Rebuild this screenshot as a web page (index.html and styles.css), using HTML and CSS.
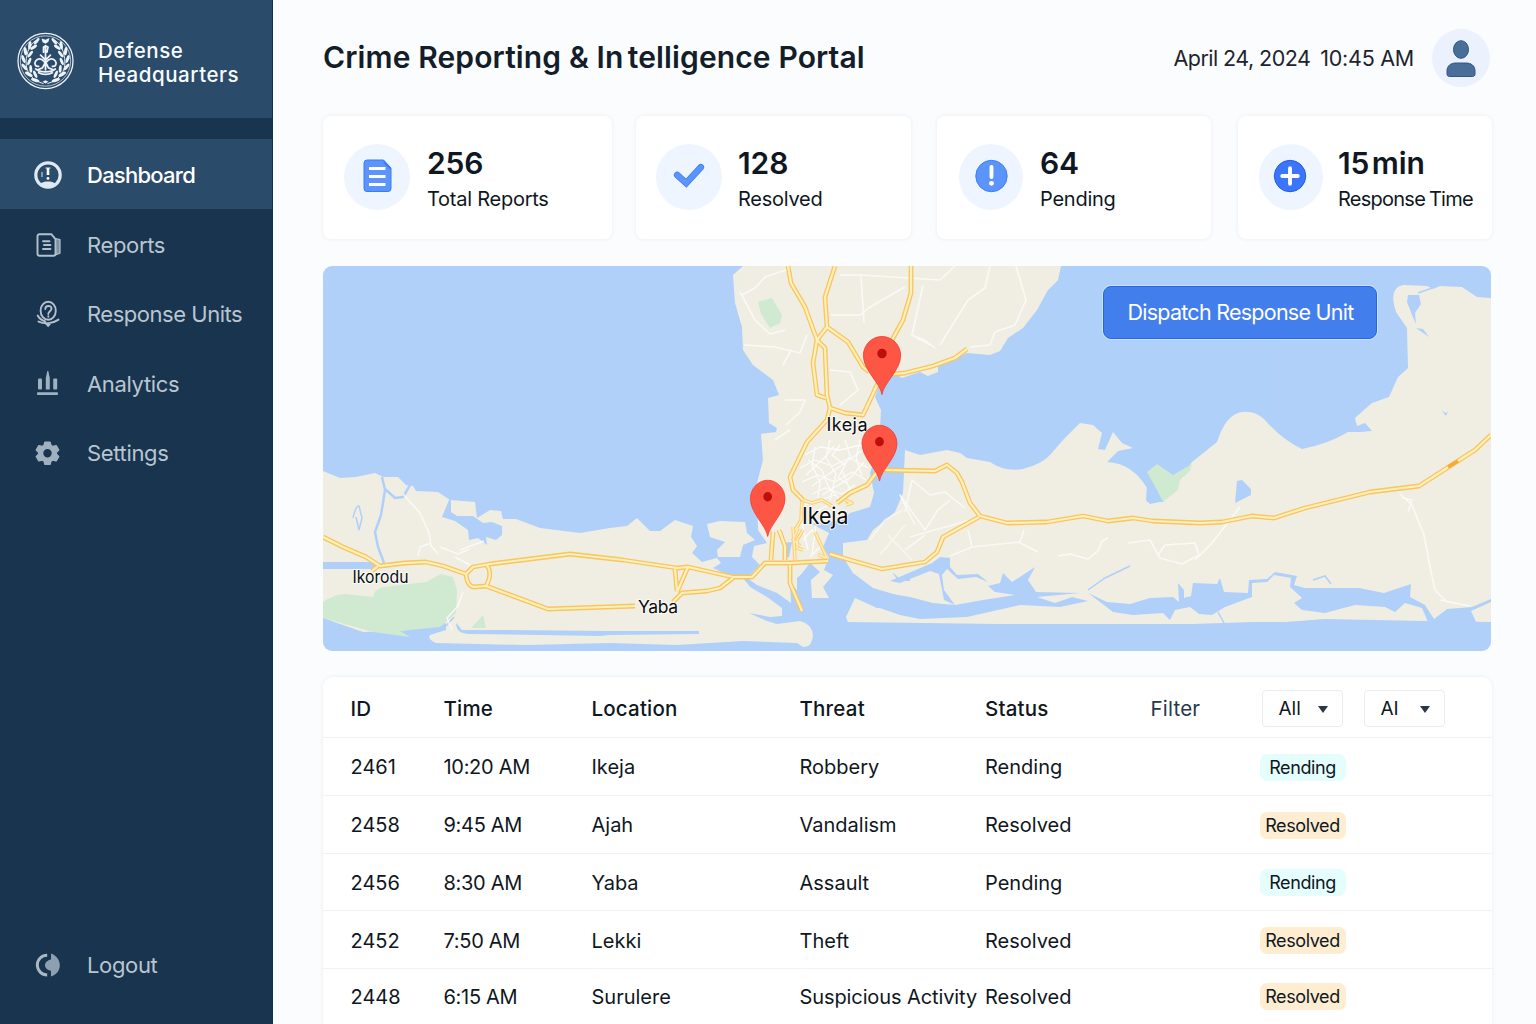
FILE: index.html
```html
<!DOCTYPE html>
<html lang="en">
<head>
<meta charset="utf-8">
<title>Crime Reporting &amp; Intelligence Portal</title>
<link rel="stylesheet" href="styles.css">
</head>
<body>
<div class="app">
  <aside class="sidebar">
    <div class="brand">
      <svg class="emblem" viewBox="0 0 58 58" fill="none" stroke="#eef3f8">
        <defs>
          <g id="laurel">
            <path d="M27 52C13 48 7 37 10 24C11 17 14 12 19 8" stroke-width="1"/>
            <g fill="#eef3f8" stroke="none">
              <ellipse cx="20" cy="9" rx="1.5" ry="4" transform="rotate(40 20 9)"/>
              <ellipse cx="13" cy="13" rx="1.6" ry="4.2" transform="rotate(8 13 13)"/>
              <ellipse cx="17" cy="15" rx="1.5" ry="4" transform="rotate(55 17 15)"/>
              <ellipse cx="8.5" cy="19" rx="1.6" ry="4.2" transform="rotate(-8 8.500 19)"/>
              <ellipse cx="13.500" cy="22" rx="1.5" ry="4" transform="rotate(38 13.500 22)"/>
              <ellipse cx="6.500" cy="27" rx="1.6" ry="4.2" transform="rotate(-20 6.500 27)"/>
              <ellipse cx="12.500" cy="29.500" rx="1.5" ry="4" transform="rotate(22 12.500 29.500)"/>
              <ellipse cx="7.500" cy="35" rx="1.6" ry="4.2" transform="rotate(-38 7.500 35)"/>
              <ellipse cx="14" cy="37" rx="1.5" ry="4" transform="rotate(-4 14 37)"/>
              <ellipse cx="12" cy="42.500" rx="1.7" ry="4.4" transform="rotate(-58 12 42.500)"/>
              <ellipse cx="18.500" cy="42.500" rx="1.5" ry="4" transform="rotate(-25 18.500 42.500)"/>
              <ellipse cx="18.500" cy="48.500" rx="1.7" ry="4.4" transform="rotate(-72 18.500 48.500)"/>
            </g>
          </g>
        </defs>
        <circle cx="29" cy="29" r="28" stroke-width="1.3"/>
        <circle cx="29" cy="29" r="25.600" stroke-width=".7"/>
        <use href="#laurel"/>
        <use href="#laurel" transform="matrix(-1 0 0 1 58 0)"/>
        <path d="M25 6l4 1.500 4-2-1 4-3 2-3-1.500z" fill="#eef3f8" stroke="none"/>
        <path d="M27 20v-5l2-1.500 2.500 1.500-1 5M29 14v24M29 28l-5-5M29 28l5-5M28 30c-3-4-7-4-9-1s0 6 3 5.500M30 30c3-4 7-4 9-1s0 6-3 5.500M29 30l-3 6-5 2M29 30l3 6 5 2M19 37c4 4 16 4 20 0M22 41c4 2 10 2 14 0" stroke-width="1.800" stroke-linecap="round"/>
        <path d="M26 50l3-1.500 3 1.500-3 2z" fill="#eef3f8" stroke="none"/>
      </svg>
      <div class="brand-name">Defense<br>Headquarters</div>
    </div>
    <nav class="nav">
      <a class="nav-item active">
        <svg class="nav-icon" viewBox="0 0 28 28" fill="none">
          <circle cx="14" cy="14" r="12.200" stroke="#dfe9f1" stroke-width="3.200"/>
          <path d="M6 22.800c2 2.600 5 3.600 8 3.600s6-1 8-3.600c-2.500-1.700-5-2.300-8-2.300s-5.500.600-8 2.300z" fill="#dfe9f1"/>
          <path d="M11.500 7h5M8 11v5" stroke="#dfe9f1" stroke-width="1"/>
          <path d="M14 7v7" stroke="#fff" stroke-width="2.600"/><circle cx="14" cy="17.400" r="1.400" fill="#fff"/>
        </svg>
        <span>Dashboard</span>
      </a>
      <a class="nav-item">
        <svg class="nav-icon" viewBox="0 0 28 28" fill="none" stroke="#b4c1cc" stroke-width="1.900" stroke-linejoin="round">
          <path d="M5.500 3.200h11.800l4.200 5v14.500a2 2 0 0 1-2 2h-14a2 2 0 0 1-2-2V5.200a2 2 0 0 1 2-2z"/>
          <path d="M21.500 7.500l4.500 1.200v13.500l-4 1.500z" fill="#7f93a5" stroke-width="1.200"/>
          <path d="M9 10.200h6.500M10 14h6.500M9 18h7.500" stroke-linecap="round"/>
        </svg>
        <span>Reports</span>
      </a>
      <a class="nav-item units">
        <svg class="nav-icon" viewBox="0 0 28 28" fill="none" stroke="#b4c1cc" stroke-width="1.900" stroke-linecap="round">
          <ellipse cx="14.200" cy="10.800" rx="7.600" ry="9"/>
          <path d="M11.300 9c0-4 6.200-4 6.200-.4 0 2.600-3.200 2.600-3.200 5.400M14.300 16.200v.6"/>
          <path d="M3.700 15.500c1.500 3 3.800 4.800 7.500 5.800M4.500 21.600c6 2.600 14 2.200 20-2"/>
          <path d="M12.500 24.500h3.200l-1.600 1.800z" stroke-width="1.200" fill="#b4c1cc"/>
        </svg>
        <span>Response Units</span>
      </a>
      <a class="nav-item">
        <svg class="nav-icon" viewBox="0 0 28 28" fill="#9fb0be">
          <rect x="4" y="8.500" width="4" height="11" rx="1"/>
          <path d="M11.800 19.500V8l1.500-7h1l1.500 7v11.500z"/>
          <rect x="19.200" y="8.500" width="4" height="11" rx="1"/>
          <rect x="3" y="22.300" width="21" height="2.800" rx=".8"/>
        </svg>
        <span>Analytics</span>
      </a>
      <a class="nav-item">
        <svg class="nav-icon" viewBox="0 0 28 28">
          <path fill="#9fb0be" fill-rule="evenodd" stroke="#9fb0be" stroke-width="1.600" stroke-linejoin="round" d="M11 3.200h5l.9 3.300 1.900 1.100 3.300-.9 2.500 4.300-2.400 2.500v1.500l2.400 2.500-2.500 4.300-3.300-.9-1.900 1.100-.9 3.300h-5l-.9-3.300-1.900-1.100-3.300.9-2.500-4.300L4.800 15v-1.500L2.400 11l2.500-4.300 3.300.9 1.900-1.100zM13.500 9.300a5 5 0 1 0 0 10 5 5 0 0 0 0-10z"/>
        </svg>
        <span>Settings</span>
      </a>
    </nav>
    <a class="nav-item logout">
      <svg class="nav-icon" viewBox="0 0 28 28">
        <path d="M13.200 4.200a9.900 9.900 0 0 0 0 19.800" fill="none" stroke="#a9b8c4" stroke-width="2.900"/>
        <path d="M17 2.500c5.500 2 8.800 6.500 8.800 11.700s-3.300 9.600-8.800 11.400v-5.900c-3.500-.5-6-2.800-6-5.500s2.500-5 6-5.700z" fill="#8d9fb0"/>
      </svg>
      <span>Logout</span>
    </a>
  </aside>

  <main class="main">
    <header class="topbar">
      <h1 class="title">Crime Reporting &amp; I<span class="kern">n</span>telligence Portal</h1>
      <div class="user">
        <span class="date">April 24, 2024</span><span class="clock">10:45 AM</span>
        <div class="avatar">
          <svg viewBox="0 0 58 58" fill="#496e98" stroke="#2f578a">
            <ellipse cx="29" cy="20.500" rx="7.500" ry="8.800"/>
            <path d="M15 45v-3c0-5.500 4-8 9-8h10c5 0 9 2.500 9 8v3c0 1.700-1 2.500-2.500 2.500h-23C16 47.500 15 46.700 15 45z"/>
          </svg>
        </div>
      </div>
    </header>

    <section class="stats">
      <article class="card card-total">
        <div class="bubble">
          <svg viewBox="0 0 66 66"><path d="M23 16h16.500l7.500 8v20.500a3 3 0 0 1-3 3H23a3 3 0 0 1-3-3V19a3 3 0 0 1 3-3z" fill="#5b94fb" stroke="#3b7df5"/><path d="M39.500 16l7.500 8v2l-7.500-7z" fill="#3b7df5"/><path d="M25 24.500h16.500M25 32.500h16.500M25 40.500h16.500" stroke="#fff" stroke-width="3.200"/></svg>
        </div>
        <div><div class="value">256</div><div class="label">Total Reports</div></div>
      </article>
      <article class="card card-resolved">
        <div class="bubble">
          <svg viewBox="0 0 66 66" fill="none"><path d="M21.200 31l9 8.200 14.600-16" stroke="#3b7df5" stroke-width="6.600" stroke-linecap="round"/><path d="M21.200 31l9 8.200 14.600-16" stroke="#5b94fb" stroke-width="5.200" stroke-linecap="round"/></svg>
        </div>
        <div><div class="value">128</div><div class="label">Resolved</div></div>
      </article>
      <article class="card card-pending">
        <div class="bubble">
          <svg viewBox="0 0 66 66"><circle cx="33.500" cy="32" r="16.200" fill="#5b94fb" stroke="#3b7df5"/><path d="M33.500 22.500v10.500" stroke="#fff" stroke-width="4" stroke-linecap="round"/><circle cx="33.500" cy="39.500" r="2.500" fill="#fff"/></svg>
        </div>
        <div><div class="value">64</div><div class="label">Pending</div></div>
      </article>
      <article class="card card-time">
        <div class="bubble">
          <svg viewBox="0 0 66 66"><circle cx="32" cy="32" r="16.200" fill="#3b76fa" stroke="#1c5cf0"/><path d="M32 24v16M24 32h16" stroke="#fff" stroke-width="4" stroke-linecap="round"/></svg>
        </div>
        <div><div class="value">15 min</div><div class="label">Response Time</div></div>
      </article>
    </section>

    <section class="map">
      <svg class="map-canvas" viewBox="323 266 1168 385" preserveAspectRatio="none">
        <defs>
          <g id="roads" fill="none" stroke-linejoin="round">
            <path d="M323 537L343 547 366 557 380 566 405 563 426 562 443 566 466 574 473 567 490 564 530 559 570 554 623 560 677 568 688 567 733 577 752 577 765 563 790 563 828 561"/>
            <path d="M466 574Q467 586 474 587L486 586Q493 574 487 565M486 586L548 609 635 606M378 566L372 571"/>
            <path d="M675 569L677 591M688 567L677 592M733 578L720 588 707 591 682 593 673 602"/>
            <path d="M773 532L771 560M779 530L785 546 785 560M790 565L790 583 802 611"/>
            <path d="M788 266L791 283 805 307 817 340 825 348 827 395 830 408 827 420 807 442 790 477 793 490 803 500"/>
            <path d="M835 266L825 297 827 327 817 340 813 363 817 395 826 398M827 327L848 342 863 367 869 372M911 266L911 293 903 320 892 340"/>
            <path d="M893 374L905 373 933 366 955 358 967 349M878 383L863 415 845 413 830 408"/>
            <path d="M883 470L935 471 947 465 957 473 962 482 970 503 980 516 1007 523 1047 522 1083 516 1108 521 1133 518 1153 521 1200 523 1222 522 1252 516 1274 518 1305 508 1370 492 1419 486 1475 450 1491 435"/>
            <path d="M979 517L943 537 937 552 925 562 900 566 882 569 850 560 830 554M877 472L867 485 850 493 837 503"/>
          </g>
          <g id="streets" fill="none" stroke-linejoin="round">
            <path d="M793 527L795 560M803 530L797 540 797 548 803 550M798 528L793 540 800 546M802 500L801 520 795 530M803 500L812 503 822 500 832 506M815 532L827 558M818 554L826 558M845 500L852 503 846 505"/>
          </g>
        </defs>
        <rect x="323" y="266" width="1168" height="385" fill="#b0d0f9"/>
        <g fill="#f0eee3">
          <path d="M323 471L340 478 356 477 375 473 383 477 398 477 406 485 413 486 416 491 438 492 450 500 475 502 477 518 490 510 501 511 503 519 516 519 540 528 580 533 610 528 627 526 637 518 650 531 660 531 675 520 693 526 691 537 697 546 692 553 702 562 717 558 721 563 713 568 724 573 743 578 750 587 767 597 782 608 782 616 770 617 749 613 767 621 777 624 800 621Q812 624 813 635 812 648 803 647L797 643 743 641 677 645 610 643 526 645 436 643Q427 639 430 635L446 630 446 623 400 631 363 632 323 618Z"/>
          <path d="M707 524L720 521 745 522 747 533 755 540 743 545 740 557 718 557 717 550 725 542 710 537Z"/>
          <path d="M743 266L733 275 735 303 742 327 743 350 753 365 773 380 779 395 768 398 769 423 777 428 776 432 761 434 763 460 757 483 758 530 767 543 754 546 752 557 760 565 747 578 757 585 777 593 791 603 790 583 797 590 797 578 810 567 812 598 829 598 823 587 833 575 824 570 829 557 823 547 829 533 812 524 843 520 850 513 870 507 874 493 870 473 878 450 880 427 881 410 875 397 880 383 893 372 902 378 920 372 928 376 938 372 938 365 948 363 967 353 990 355 1000 351 1008 338 1023 328 1037 310 1048 290 1058 280 1061 266Z"/>
          <path d="M905 450L920 455 947 450 960 453 967 458 990 462Q1004 472 1023 469 1042 464 1050 455L1063 440 1080 423 1093 425 1102 433 1098 449 1105 450 1113 432 1122 443 1133 448 1118 451 1107 462Q1132 463 1147 488L1147 502 1163 502 1192 462 1217 442Q1226 414 1242 412 1254 410 1264 419 1282 440 1302 449 1328 444 1348 432L1360 432 1372 431 1365 423 1357 426 1355 418 1372 403 1389 397 1398 377 1408 368 1407 328 1396 312Q1388 288 1403 285L1427 286 1433 289 1440 286 1462 287 1477 297 1491 298V622L1425 621 1325 619 1285 622 1252 622 1192 624 1000 624 848 622 846 617 855 598 877 608 900 608 900 596 873 588 853 573 843 557 843 543 867 540 873 530 883 522 895 512 903 493Z"/>
        </g>
        <g fill="#cfead0">
          <path d="M323 602Q335 594 345 594L373 597Q374 589 384 587L426 582 441 574 453 577 457 590 456 613 440 627 400 631 410 637 373 632 323 618Z"/>
          <path d="M483 615L486 628 471 628ZM758 302L772 298 782 315 780 323 770 328 761 314Z"/>
          <path d="M1147 472L1157 464 1173 475 1192 464 1190 471 1180 480 1178 490 1163 502 1157 490Z"/>
        </g>
        <g fill="#b0d0f9">
          <path d="M850 587L910 597 933 603 955 605 983 600 1015 595 995 592 988 586 1000 583 1003 573 1012 582 1035 567 1028 580 1036 592 1080 593 1037 597 1055 603 1072 597 1088 601 1060 607 1020 605 967 617 920 619 900 615 877 607Z"/>
          <path d="M1088 593L1107 602 1130 604 1150 598 1173 597 1179 602 1178 583 1184 590 1184 598 1191 596 1193 583 1217 584 1220 578 1224 592 1248 593 1249 580 1267 579 1275 572 1297 576 1294 585 1305 588 1359 588 1384 593 1411 584 1410 597 1425 605 1434 619 1447 609 1472 607 1491 599V602L1471 611 1477 624 1428 622 1422 608 1405 603 1395 612 1385 607 1355 605 1325 613 1302 610 1294 603 1302 598 1290 587 1291 578 1274 575 1267 582 1252 583 1252 597 1225 607 1212 615 1199 614 1190 607 1175 610 1170 620 1163 613 1133 615 1113 612 1100 602Z"/>
          <path d="M449 500H451V512L457 516 473 516 483 523 492 522 502 526 502 535 496 540 486 537 487 545 478 538 469 540 468 530 455 521 442 517ZM932 563L940 557 950 558 950 567 957 575 978 574 988 582 976 577 958 579 947 569 942 575 944 590 955 605 944 600 939 574 930 571 900 583 890 581Z"/>
          <path d="M1408 295L1419 295 1421 304 1415 313 1416 324 1412 315 1407 302ZM1416 328L1423 329 1429 337ZM1237 481L1242 480 1251 489 1251 495 1235 503ZM1147 485L1155 495 1160 502 1150 504 1146 500ZM323 562H377V569H323ZM458 625L462 630 500 630 610 631 699 631 699 634 610 635 600 636 470 634Q456 634 456 623ZM1442 411l4 2 2-2-2 5z"/>
          <path d="M800 576L810 563 820 572 810 581 799 588ZM783 543L792 542 789 557 786 558ZM892 572L898 581 910 581 910 575 900 579Z"/>
        </g>
        <path d="M382 477L385 490 381 515 375 532 378 547 384 563M385 489L395 498 403 497 410 485" fill="none" stroke="#b0d0f9" stroke-width="2.500"/>
        <path d="M353 518Q356 505 359 506L362 518 359 530 356 517M1088 590L1105 578 1130 566M1313 580L1325 576 1331 584M1218 612L1224 623M446 626L454 617M1418 293L1432 288" fill="none" stroke="#b0d0f9" stroke-width="1.500"/>
        <g fill="none" stroke="#fbfbf8" stroke-width="1.600" stroke-linejoin="round" opacity=".85">
          <path d="M403 494L420 513 429 533 431 546 438 554M418 556L420 547 431 543M440 547L458 554 470 549M455 557L470 565M463 592L458 606 447 618 452 630M484 541L460 550"/>
          <path d="M742 295L755 288 765 277 786 270M740 292L755 320 770 334 785 330M744 345L775 347 800 353 807 335M783 365L791 350M840 275L861 275 940 280 955 266M861 276L864 323M831 315L860 315 870 307 905 287M785 400L805 400 800 412 786 425M830 370L850 372 858 390 840 405M775 440L790 430"/>
          <path d="M923 285L912 335 930 345M940 345L968 300 985 288 990 266M1016 266L1026 300 1015 325 995 332 990 345 970 347M911 335L925 340 935 348"/>
          <path d="M905 512L912 480 930 495 945 492 965 508M915 525L900 495 925 530 938 510 950 500M910 537L970 520M905 550L925 535M950 556L972 547 968 530M972 547L1000 544 1020 542 1024 530M1020 543L1038 552M1058 556L1070 554 1088 559 1098 551 1102 541 1108 538M1128 543L1150 540 1160 558 1182 564 1199 555 1195 543 1165 545 1158 555M1195 560L1212 543 1240 507M1400 494L1412 505 1424 535 1429 562 1435 590 1447 602M1408 512L1412 500 1402 498M1440 600L1470 606"/>
          <path d="M870 540L885 520 903 510M880 555L905 525M888 535L912 560" opacity=".8"/>
        </g>
        <g fill="none" stroke="#fff" stroke-width="1.300" stroke-linejoin="round" opacity=".75">
          <path d="M805 455L820 447 840 450 860 445 872 455M800 468L815 460 832 466 850 458 868 468M802 482L818 475 835 482 852 472 866 480M812 494L825 488 842 494 855 485M815 447L812 465 820 482 818 498M830 440L826 458 836 474 830 500M845 440L850 456 842 470 850 490M860 440L856 458 862 476M808 460L822 470 828 486 840 500M840 445L832 455 845 465 838 478 848 484M806 475L824 458 834 446M812 486L846 462 866 448M822 495L850 478 864 462"/>
          <path d="M805 505L835 495M810 515L828 505M803 540L812 530 822 545 810 557M800 515L808 550M816 525L812 555"/>
        </g>
        <use href="#streets" stroke="#fad07a" stroke-width="3.600"/>
        <use href="#streets" stroke="#fff0bb" stroke-width="1.400"/>
        <use href="#roads" stroke="#f8c55f" stroke-width="4.800"/>
        <use href="#roads" stroke="#fff0bb" stroke-width="2.200"/>
        <path d="M1448 467L1458 461" stroke="#f6ab35" stroke-width="3.500"/>
        <g class="place">
          <text x="826.500" y="430.500" font-size="18" textLength="41">Ikeja</text>
          <text x="802" y="524" font-size="22.500" textLength="46.500" lengthAdjust="spacingAndGlyphs">Ikeja</text>
          <text x="352.500" y="582.500" font-size="17" textLength="56" lengthAdjust="spacingAndGlyphs">Ikorodu</text>
          <text x="638" y="612.500" font-size="17.500" textLength="40">Yaba</text>
        </g>
        <defs>
          <g id="pin"><path d="M0 0C-2-12-19-24-19-39A19 19 0 0 1 19-39C19-24 2-12 0 0Z" fill="#fe5645" stroke="#f1392c" stroke-width=".8"/><circle cy="-41" r="4.800" fill="#bd0f0b"/></g>
        </defs>
        <use href="#pin" transform="translate(882 394.500) scale(.98 1)"/>
        <use href="#pin" transform="translate(879.500 481) scale(.92 .96)"/>
        <use href="#pin" transform="translate(767.700 536.500) scale(.91 .97)"/>
      </svg>
      <button class="dispatch">Dispatch Response Unit</button>
    </section>

    <section class="table">
      <div class="row head">
        <span>ID</span><span>Time</span><span>Location</span><span>Threat</span><span>Status</span><span class="filter">Filter</span>
        <span class="select">All<i class="caret"></i></span><span class="select">AI<i class="caret"></i></span>
      </div>
      <div class="row"><span>2461</span><span class="time">10:20 AM</span><span>Ikeja</span><span>Robbery</span><span>Rending</span><span></span><span class="badge pending">Rending</span></div>
      <div class="row"><span>2458</span><span class="time">9:45 AM</span><span>Ajah</span><span>Vandalism</span><span>Resolved</span><span></span><span class="badge resolved">Resolved</span></div>
      <div class="row"><span>2456</span><span class="time">8:30 AM</span><span>Yaba</span><span>Assault</span><span>Pending</span><span></span><span class="badge pending">Rending</span></div>
      <div class="row"><span>2452</span><span class="time">7:50 AM</span><span>Lekki</span><span>Theft</span><span>Resolved</span><span></span><span class="badge resolved">Resolved</span></div>
      <div class="row last"><span>2448</span><span class="time">6:15 AM</span><span>Surulere</span><span class="long">Suspicious Activity</span><span>Resolved</span><span></span><span class="badge resolved">Resolved</span></div>
    </section>
  </main>
</div>
</body>
</html>
```
FILE: styles.css
```css
* { box-sizing: border-box; }

body {
  margin: 0;
  font-family: Inter, "Liberation Sans", sans-serif;
  color: #0f1722;
  background: #fbfcfd;
}

svg { display: block; }

.app {
  display: flex;
  width: 1536px;
  height: 1024px;
  overflow: hidden;
}

/* Sidebar */
.sidebar {
  display: flex;
  flex-direction: column;
  flex: none;
  width: 273px;
  background: #18344f;
  border-right: 1px solid #153049;
}

.brand {
  display: flex;
  align-items: center;
  gap: 24px;
  height: 118px;
  margin-bottom: 21px;
  padding: 4px 0 0 17px;
  background: #2b4b6a;
}

.emblem { width: 57px; height: 58px; }

.brand-name {
  padding-top: 4px;
  color: #f7fafc;
  font-size: 20.5px;
  font-weight: 500;
  line-height: 24px;
  letter-spacing: 0.55px;
}

.nav { flex: 1; }

.nav-item {
  display: flex;
  align-items: center;
  gap: 25px;
  height: 69.5px;
  padding: 2px 0 0 34px;
  color: #b9c6d0;
  font-size: 22px;
  letter-spacing: -0.35px;
}

.nav-item.active {
  height: 70px;
  background: #2b4b6a;
  color: #fff;
  font-weight: 500;
  letter-spacing: -0.75px;
}

.nav-item.units { letter-spacing: -0.48px; }

.nav-icon { width: 28px; height: 28px; }

.logout { margin-bottom: 25px; }

/* Main column */
.main {
  display: flex;
  flex-direction: column;
  width: 1263px;
  padding: 0 44px 0 50px;
}

.topbar {
  display: flex;
  align-items: center;
  justify-content: space-between;
  flex: none;
  height: 116px;
}

.title {
  margin: 0 0 2px;
  font-size: 30px;
  font-weight: 600;
  letter-spacing: 0.12px;
  color: #141d2a;
}

.kern { letter-spacing: 4.5px; }

.user {
  display: flex;
  align-items: center;
  padding: 0 2px 0 0;
  font-size: 21.5px;
  color: #1c2430;
}

.date { letter-spacing: -0.55px; }
.clock { margin-left: 10px; letter-spacing: -0.25px; }

.avatar {
  width: 58px;
  height: 58px;
  margin-left: 18px;
  border-radius: 50%;
  background: #ebf2fd;
}

/* Stat cards */
.stats {
  display: flex;
  flex: none;
  height: 123px;
}

.card {
  display: flex;
  align-items: center;
  gap: 16px;
  padding: 0 0 1px 21px;
  border-radius: 8px;
  background: #fff;
  box-shadow: 0 0 4px rgba(30, 50, 90, 0.08);
}

.card-total { width: 289px; gap: 17px; }
.card-resolved { width: 275px; margin-left: 24px; padding-left: 20px; }
.card-pending { width: 274px; margin-left: 26px; padding-left: 22px; gap: 17px; }
.card-time { width: 254px; margin-left: 27px; gap: 15px; }

.bubble {
  flex: none;
  width: 66px;
  height: 66px;
  border-radius: 50%;
  background: #eff5fe;
}

.card-pending .bubble, .card-time .bubble { width: 64px; }
.bubble svg { width: 100%; height: 66px; }

.value {
  padding-top: 7px;
  font-size: 30px;
  font-weight: 600;
  line-height: 38px;
  letter-spacing: -0.1px;
}

.label {
  font-size: 20px;
  line-height: 35px;
  letter-spacing: -0.25px;
  white-space: nowrap;
}

.card-time .value { word-spacing: -5px; }
.card-time .label { letter-spacing: -0.75px; word-spacing: -1px; }

/* Incident map */
.map {
  position: relative;
  flex: none;
  width: 1168px;
  height: 385px;
  margin: 27px 0 26px;
  overflow: hidden;
  border-radius: 9px;
}

.map-canvas { width: 1168px; height: 385px; }

.place {
  fill: #0b0d10;
  paint-order: stroke;
  stroke: rgba(255, 255, 255, 0.75);
  stroke-width: 2px;
}

.dispatch {
  position: absolute;
  top: 20px;
  right: 114px;
  width: 274px;
  height: 53px;
  padding: 0 0 2px 1px;
  border: 1px solid #2567ea;
  border-radius: 8px;
  background: #437eed;
  box-shadow: 0 0 0 1px rgba(225, 240, 255, 0.6);
  color: #fff;
  font: 400 21.5px Inter, "Liberation Sans", sans-serif;
  letter-spacing: -0.75px;
}

/* Reports table */
.table {
  flex: none;
  width: 1169px;
  border-radius: 10px;
  background: #fff;
  box-shadow: 0 0 4px rgba(30, 50, 90, 0.08);
}

.row {
  display: grid;
  grid-template-columns: 93px 148px 208px 185.5px 165.5px 111px 102px 81px;
  align-items: center;
  height: 57.8px;
  padding: 2px 0 0 27.5px;
  border-top: 1px solid #f0f2f5;
  font-size: 20px;
  white-space: nowrap;
}

.row.head {
  height: 60px;
  border-top: 0;
  font-size: 20.5px;
  font-weight: 500;
  letter-spacing: 0.2px;
}

.row.last { height: 64px; padding: 0 0 8px 27.5px; }

.time { letter-spacing: -0.3px; }
.long { letter-spacing: -0.1px; }
.head .filter { color: #26364d; font-weight: 400; }

.select {
  display: flex;
  align-items: center;
  justify-content: space-between;
  width: 81px;
  height: 37px;
  padding: 0 14px 0 16px;
  border: 1px solid #e9ecf1;
  border-radius: 4px;
  font-size: 19px;
  font-weight: 400;
  letter-spacing: 0;
}

.caret {
  width: 0;
  margin-top: 3px;
  border: 5.5px solid transparent;
  border-top: 7px solid #2b3646;
  border-bottom: 0;
}

.badge {
  width: 86px;
  height: 27px;
  margin-left: -2px;
  border-radius: 7px;
  font-size: 18px;
  line-height: 27px;
  letter-spacing: -0.4px;
  text-align: center;
}

.badge.pending { background: #e6fdfd; }
.badge.resolved { background: #feedd0; }
```
